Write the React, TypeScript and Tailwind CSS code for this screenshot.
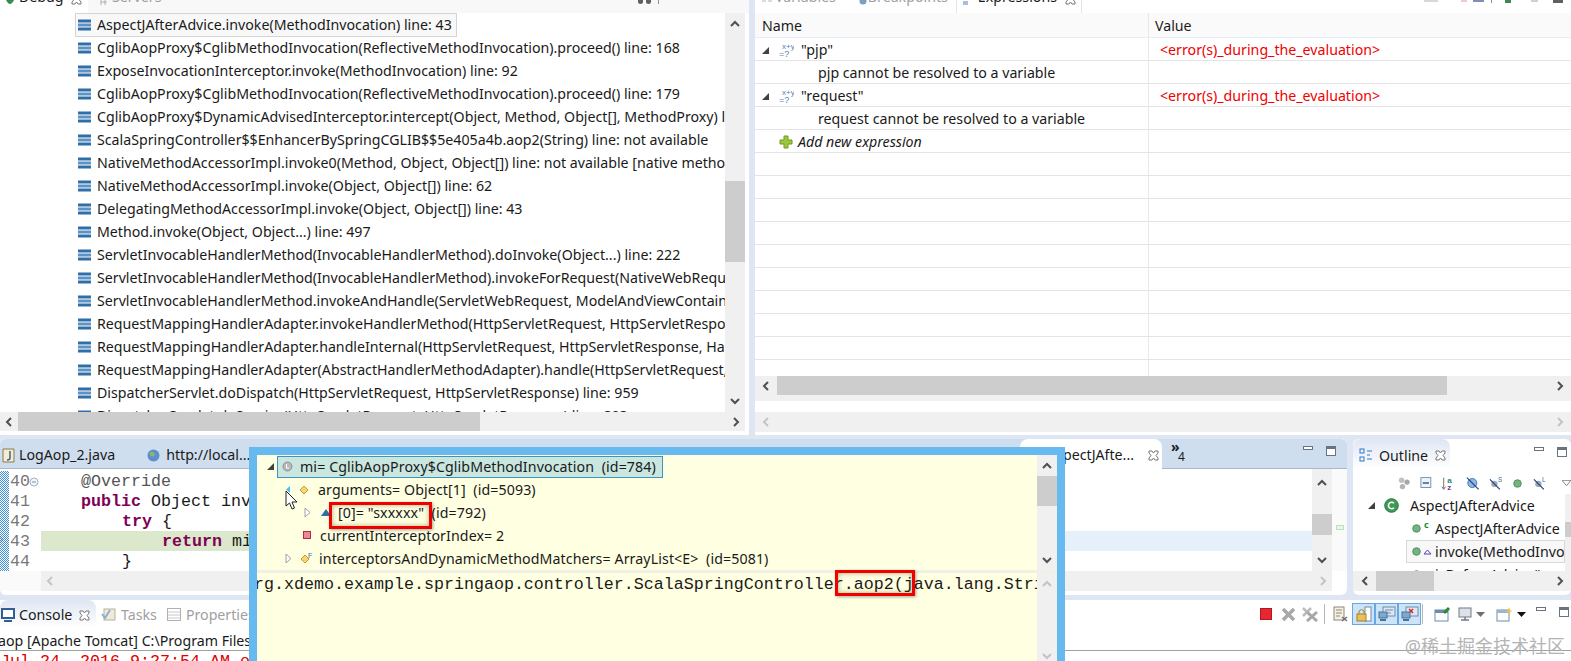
import React from "react";

const Chev = ({ dir, dim }: { dir: "l" | "r" | "u" | "d"; dim?: boolean }) => {
  const d = { l: "M7 1 L3 5 L7 9", r: "M3 1 L7 5 L3 9", u: "M1 7 L5 3 L9 7", d: "M1 3 L5 7 L9 3" }[dir];
  return (
    <svg width="10" height="10" viewBox="0 0 10 10" className="block">
      <path d={d} fill="none" stroke={dim ? "#c4c4c4" : "#505050"} strokeWidth="2" />
    </svg>
  );
};

const HScroll = ({ thumb, arrow = 18, dim, className = "" }: { thumb?: number; arrow?: number; dim?: boolean; className?: string }) => (
  <div className={`flex h-[19px] bg-[#f0f0f0] items-center ${className}`}>
    <div className="flex justify-center shrink-0" style={{ width: arrow }}><Chev dir="l" dim={dim} /></div>
    {thumb ? <div className="h-full bg-[#cdcdcd]" style={{ width: thumb }} /> : null}
    <div className="flex-1" />
    <div className="flex justify-center shrink-0" style={{ width: arrow }}><Chev dir="r" dim={dim} /></div>
  </div>
);

const Frame = () => (
  <svg width="13" height="12" viewBox="0 0 13 12" className="shrink-0">
    <rect x="0" y="0.5" width="13" height="3" fill="#2f6fa8" />
    <rect x="0" y="4.5" width="13" height="3" fill="#5d93c4" />
    <rect x="0" y="8.5" width="13" height="3" fill="#2f6fa8" />
  </svg>
);

const Tri = ({ open, className = "" }: { open?: boolean; className?: string }) =>
  open ? (
    <svg width="9" height="9" viewBox="0 0 9 9" className={className}><path d="M1 8 L8 8 L8 1 Z" fill="#404040" /></svg>
  ) : (
    <svg width="9" height="11" viewBox="0 0 9 11" className={className}><path d="M2 1 L7 5.5 L2 10 Z" fill="#fff" stroke="#9aa0a6" /></svg>
  );

const Close = ({ c = "#777" }: { c?: string }) => (
  <svg width="11" height="11" viewBox="0 0 11 11" className="shrink-0">
    <path d="M1 1 L4 1 L5.5 3 L7 1 L10 1 L10 3 L8 5.5 L10 8 L10 10 L7 10 L5.5 8 L4 10 L1 10 L1 8 L3 5.5 L1 3 Z" fill="#fff" stroke={c} />
  </svg>
);

const MinMax = () => (
  <div className="flex items-start gap-[12px]">
    <svg width="11" height="11" viewBox="0 0 11 11"><rect x="0.5" y="0.5" width="9" height="3" fill="#fff" stroke="#6b7280" /></svg>
    <svg width="11" height="11" viewBox="0 0 11 11"><rect x="0.5" y="0.5" width="9" height="9" fill="#fff" stroke="#6b7280" /><rect x="0.5" y="0.5" width="9" height="2.5" fill="#6b7280" /></svg>
  </div>
);

const XY = () => (
  <svg width="15" height="17" viewBox="0 0 15 17" className="shrink-0">
    <text x="3" y="7" fontSize="8" fill="#5a7fb5" fontFamily="Liberation Sans">x+y</text>
    <text x="0" y="15" fontSize="9" fill="#5a7fb5" fontFamily="Liberation Sans">=?</text>
  </svg>
);

const Plus = () => (
  <svg width="14" height="14" viewBox="0 0 14 14" className="shrink-0">
    <path d="M5 1 H9 V5 H13 V9 H9 V13 H5 V9 H1 V5 H5 Z" fill="#9cc63e" stroke="#6f9a24" />
  </svg>
);

const Diamond = ({ f }: { f?: boolean }) => (
  <svg width="14" height="14" viewBox="0 0 14 14" className="shrink-0">
    <path d="M6 3 L10 7 L6 11 L2 7 Z" fill="#f5d77a" stroke="#c8962c" />
    {f ? <text x="9" y="6" fontSize="7" fill="#2f6fa8" fontFamily="Liberation Sans">F</text> : null}
  </svg>
);

const Dot = () => (
  <svg width="9" height="9" viewBox="0 0 9 9" className="shrink-0"><circle cx="4.5" cy="4.5" r="3.8" fill="#74b27f" stroke="#3e8a4c" strokeWidth="0.8" /></svg>
);

const GreenC = () => (
  <svg width="15" height="15" viewBox="0 0 15 15" className="shrink-0">
    <circle cx="7.5" cy="7.5" r="6.8" fill="#3c9a55" stroke="#2a7a40" />
    <path d="M10 5.3 A3.2 3.2 0 1 0 10 9.7" fill="none" stroke="#fff" strokeWidth="1.6" />
  </svg>
);

const frames = [
  "AspectJAfterAdvice.invoke(MethodInvocation) line: 43",
  "CglibAopProxy$CglibMethodInvocation(ReflectiveMethodInvocation).proceed() line: 168",
  "ExposeInvocationInterceptor.invoke(MethodInvocation) line: 92",
  "CglibAopProxy$CglibMethodInvocation(ReflectiveMethodInvocation).proceed() line: 179",
  "CglibAopProxy$DynamicAdvisedInterceptor.intercept(Object, Method, Object[], MethodProxy) line: 655",
  "ScalaSpringController$$EnhancerBySpringCGLIB$$5e405a4b.aop2(String) line: not available",
  "NativeMethodAccessorImpl.invoke0(Method, Object, Object[]) line: not available [native method]",
  "NativeMethodAccessorImpl.invoke(Object, Object[]) line: 62",
  "DelegatingMethodAccessorImpl.invoke(Object, Object[]) line: 43",
  "Method.invoke(Object, Object...) line: 497",
  "ServletInvocableHandlerMethod(InvocableHandlerMethod).doInvoke(Object...) line: 222",
  "ServletInvocableHandlerMethod(InvocableHandlerMethod).invokeForRequest(NativeWebRequest, ModelAndViewContainer)",
  "ServletInvocableHandlerMethod.invokeAndHandle(ServletWebRequest, ModelAndViewContainer, Object...)",
  "RequestMappingHandlerAdapter.invokeHandlerMethod(HttpServletRequest, HttpServletResponse, HandlerMethod)",
  "RequestMappingHandlerAdapter.handleInternal(HttpServletRequest, HttpServletResponse, HandlerMethod)",
  "RequestMappingHandlerAdapter(AbstractHandlerMethodAdapter).handle(HttpServletRequest, HttpServletResponse, Object)",
  "DispatcherServlet.doDispatch(HttpServletRequest, HttpServletResponse) line: 959",
  "DispatcherServlet.doService(HttpServletRequest, HttpServletResponse) line: 893",
];

const exprRows = [
  { name: '"pjp"', kind: "expr", value: "<error(s)_during_the_evaluation>" },
  { name: "pjp cannot be resolved to a variable", kind: "child" },
  { name: '"request"', kind: "expr", value: "<error(s)_during_the_evaluation>" },
  { name: "request cannot be resolved to a variable", kind: "child" },
  { name: "Add new expression", kind: "add" },
  ...Array.from({ length: 10 }, () => ({ name: "", kind: "empty" })),
] as { name: string; kind: string; value?: string }[];

const code = [
  { n: "40", body: <span className="ml-[40px] text-[#555]">@Override</span> },
  {
    n: "41",
    body: (
      <span className="ml-[40px]">
        <b className="text-[#7f0055]">public</b> Object invoke(MethodInvocation mi) throws Throwable {"{"}
      </span>
    ),
  },
  { n: "42", body: <span className="ml-[81px]"><b className="text-[#7f0055]">try</b> {"{"}</span> },
  { n: "43", body: <span className="ml-[121px]"><b className="text-[#7f0055]">return</b> mi.proceed();</span>, hl: true },
  { n: "44", body: <span className="ml-[81px]">{"}"}</span> },
];

const Btn = ({ children, w = 22, on }: { children: React.ReactNode; w?: number; on?: boolean }) => (
  <div
    className={`h-[22px] flex items-center justify-center shrink-0 ${on ? "bg-[#cce4f8] border border-[#66a7e8]" : ""}`}
    style={{ width: w }}
  >
    {children}
  </div>
);

const Page = () => (
  <svg width="16" height="16" viewBox="0 0 16 16"><rect x="2" y="1" width="10" height="13" fill="#f5f0e0" stroke="#8a8a7a" /><path d="M4 4 H10 M4 7 H10 M4 10 H8" stroke="#8a8a7a" /><path d="M10 11 L15 15 M15 11 L10 15" stroke="#707070" strokeWidth="1.5" /></svg>
);
const Monitor = ({ red }: { red?: boolean }) => (
  <svg width="18" height="16" viewBox="0 0 18 16">
    <rect x="5" y="1" width="12" height="9" fill="#dfe8f2" stroke="#6b8bad" />
    {red ? <path d="M8 3 L12 7 M12 3 L8 7" stroke="#d22" strokeWidth="1.5" /> : <path d="M7 4 H15 M7 7 H13" stroke="#6b8bad" />}
    <rect x="1" y="6" width="8" height="6" fill="#7fa8d0" stroke="#4a7197" />
    <path d="M2 14 H8" stroke="#4a7197" strokeWidth="2" />
  </svg>
);

export default function App() {
  return (
    <div className="relative w-[1571px] h-[661px] overflow-hidden bg-[#dfe6f3] flex flex-col font-['Noto_Sans','Noto_Sans_CJK_SC',sans-serif] text-[14.2px] text-[#1a1a1a]">
      {/* top */}
      <div className="flex h-[435px] shrink-0 gap-[6px]">
        {/* debug */}
        <div className="w-[749px] bg-white flex flex-col shrink-0">
          <div className="h-[13px] overflow-hidden flex bg-[#f8f8f8]">
            <div className="w-[88px] bg-white flex h-[13px]">
              <svg width="10" height="6" viewBox="0 0 10 6" className="ml-[5px] mr-[4px] shrink-0"><path d="M1 0 Q5 8 9 0 Z" fill="#3c8a50" /></svg>
              <span className="-mt-[13px] leading-[20px] h-[20px]">Debug</span>
              <span className="ml-[7px] -mt-[6px]"><Close /></span>
            </div>
            <svg width="8" height="6" viewBox="0 0 8 6" className="ml-[12px] mr-[4px] shrink-0"><path d="M1 0 V5 M5 0 V5 M1 2 H7" stroke="#b0b0b0" /></svg>
            <span className="-mt-[13px] leading-[20px] h-[20px] text-[#a0a0a0]">Servers</span>
            <div className="ml-auto flex h-[4px] gap-[3px] pr-[90px]">
              <div className="w-[5px] h-[4px] bg-[#606060] rounded-b-full" />
              <div className="w-[5px] h-[4px] bg-[#606060] rounded-b-full" />
              <div className="w-[1px] h-[4px] bg-[#909090] ml-[4px]" />
            </div>
          </div>
          <div className="flex h-[399px] pr-[4px]">
            <div className="flex-1 min-w-0 overflow-hidden pl-[75px]">
              {frames.map((f, i) => (
                <div
                  key={f}
                  className={`flex items-center whitespace-nowrap gap-[6px] pb-[1px] ${i === 0 ? "h-[24px] w-[382px] border border-[#d4d4d4] bg-[#f8f8f8] pl-[2px]" : "h-[23px] pl-[3px]"}`}
                >
                  <Frame />
                  <span>{f}</span>
                </div>
              ))}
            </div>
            <div className="w-[20px] bg-[#f0f0f0] flex flex-col items-center shrink-0">
              <div className="h-[30px] pt-[6px] flex justify-center"><Chev dir="u" /></div>
              <div className="h-[138px]" />
              <div className="h-[81px] w-[20px] bg-[#cdcdcd]" />
              <div className="flex-1 flex items-end pb-[6px]"><Chev dir="d" /></div>
            </div>
          </div>
          <HScroll thumb={462} className="mr-[4px]" />
        </div>
        {/* expressions */}
        <div className="flex-1 bg-white flex flex-col min-w-0">
          <div className="h-[13px] overflow-hidden flex bg-white text-[#a0a0a0]">
            <svg width="10" height="6" viewBox="0 0 10 6" className="ml-[7px] mr-[3px] shrink-0"><path d="M0 1 H4 M6 1 H10" stroke="#b8b8b8" /></svg>
            <span className="-mt-[13px] leading-[20px] h-[20px]">Variables</span>
            <svg width="8" height="6" viewBox="0 0 8 6" className="ml-[23px] mr-[1px] shrink-0"><circle cx="4" cy="1" r="3.5" fill="#7f9fc0" /></svg>
            <span className="-mt-[13px] leading-[20px] h-[20px]">Breakpoints</span>
            <div className="ml-[8px] w-[126px] h-[13px] flex pl-[5px] text-[#1a1a1a] border-r border-l border-[#e4e4e4]">
              <svg width="14" height="6" viewBox="0 0 14 6" className="mr-[2px] shrink-0"><path d="M1 2 H6 M1 4 H6" stroke="#5a7fb5" /></svg>
              <span className="-mt-[13px] leading-[20px] h-[20px]">Expressions</span>
              <span className="ml-[8px] -mt-[6px]"><Close /></span>
            </div>
            <div className="ml-auto flex h-[3px] items-start pr-[8px] gap-[0px]">
              <div className="w-[14px] h-[2px] bg-[#d8d8d8] mr-[23px]" />
              <div className="w-[6px] h-[2px] bg-[#f4c8d0] mr-[6px]" />
              <div className="w-[11px] h-[2px] bg-[#8090b0] mr-[7px]" />
              <div className="w-[1px] h-[3px] bg-[#909090] mr-[13px]" />
              <div className="w-[6px] h-[3px] bg-[#3c8a50] mr-[20px]" />
              <div className="w-[7px] h-[2px] bg-[#d0d0d0] mr-[15px]" />
              <div className="w-[10px] h-[3px] bg-[#606060]" />
            </div>
          </div>
          <div className="h-[25px] bg-[#fafafa] border-b border-[#e6eef9] flex items-center shrink-0">
            <div className="w-[394px] pl-[7px] pt-[2px] border-r border-[#e8e8e8] h-full flex items-center">Name</div>
            <div className="pl-[6px] pt-[2px]">Value</div>
          </div>
          <div className="h-[338px] overflow-hidden">
            {exprRows.map((r, i) => (
              <div key={i} className="h-[23px] flex border-b border-[#e4e4e4]">
                <div className="w-[394px] pt-[2px] border-r border-[#e8e8e8] flex items-center whitespace-nowrap">
                  {r.kind === "expr" && (
                    <>
                      <Tri open className="ml-[6px] mr-[9px]" />
                      <XY />
                      <span className="ml-[7px]">{r.name}</span>
                    </>
                  )}
                  {r.kind === "child" && <span className="ml-[63px]">{r.name}</span>}
                  {r.kind === "add" && (
                    <>
                      <span className="ml-[24px]"><Plus /></span>
                      <i className="ml-[5px]">{r.name}</i>
                    </>
                  )}
                </div>
                <div className="pl-[11px] pt-[2px] flex items-center text-[#f00000]">{r.value}</div>
              </div>
            ))}
          </div>
          <HScroll thumb={670} arrow={22} className="shrink-0" />
          <div className="h-[6px] bg-[#f0f0f0] shrink-0" />
          <div className="h-[11px] mr-[7px] shrink-0" />
          <HScroll dim arrow={22} className="h-[20px] shrink-0" />
        </div>
      </div>
      {/* middle */}
      <div className="flex h-[156px] mt-[4px] gap-[6px] shrink-0">
        <div className="w-[1347px] bg-white flex flex-col shrink-0 rounded-[6px] overflow-hidden">
          <div className="h-[30px] pt-[3px] bg-[#cfdeee] border-b border-[#a9b8cc] flex items-center shrink-0 relative">
            <svg width="13" height="15" viewBox="0 0 13 15" className="ml-[2px] shrink-0"><path d="M1 1 H12 V14 H1 Z" fill="#f5ecd0" stroke="#8a7a4a" /><path d="M8 3 V10 Q8 12 5 12" fill="none" stroke="#3a5f9a" strokeWidth="1.5" /></svg>
            <span className="ml-[4px]">LogAop_2.java</span>
            <svg width="13" height="13" viewBox="0 0 13 13" className="ml-[32px] shrink-0"><circle cx="6.5" cy="6.5" r="6" fill="#5b8fd0" /><path d="M3 3 Q7 2 8 6 Q5 9 3 6 Z" fill="#8fb56a" /></svg>
            <span className="ml-[6px]">http://local...</span>
            <div className="ml-auto flex items-center h-[30px] -mt-[3px]">
              <div className="w-[142px] h-[30px] pt-[3px] bg-white rounded-t-[8px] flex items-center justify-end pr-[3px] gap-[14px] whitespace-nowrap overflow-hidden mr-[9px]">
                <span>AspectJAfte...</span>
                <Close />
              </div>
              <div className="w-[132px] h-[30px] pt-[4px] text-[12px] leading-none">
                <div className="font-bold text-[14px] leading-[8px]">»</div>
                <div className="pl-[7px]">4</div>
              </div>
              <div className="mr-[10px] -mt-[4px]"><MinMax /></div>
            </div>
          </div>
          <div className="flex h-[102px] shrink-0">
            <div className="relative w-[9px] h-[100px] bg-[repeating-conic-gradient(#3f8fe0_0_25%,#ffffff_0_50%)] bg-[length:2px_2px] shrink-0 mt-[2px]">
              <svg width="4" height="9" viewBox="0 0 4 9" className="absolute left-0 top-[64px]"><path d="M0 1 L3 4.5 L0 8" fill="none" stroke="#60707f" /></svg>
            </div>
            <div className="flex-1 min-w-0 overflow-hidden pt-[2px] font-['Liberation_Mono',monospace] text-[16.67px]">
              {code.map((l) => (
                <div key={l.n} className="h-[20px] leading-[22px] flex whitespace-nowrap">
                  <span className="w-[32px] shrink-0 pl-[1px] text-[#787878] flex items-start">
                    {l.n}
                    {l.n === "40" ? (
                      <svg width="10" height="10" viewBox="0 0 10 10" className="mt-[6px] ml-[-1px] shrink-0"><circle cx="5" cy="5" r="4" fill="#f2f5f9" stroke="#a8b4c4" /><path d="M3 5 H7" stroke="#8090a4" /></svg>
                    ) : null}
                  </span>
                  <div className={`flex-1 ${l.hl ? "bg-[linear-gradient(90deg,#dbe8cc_0,#dbe8cc_300px,#e6f0fb_300px)]" : ""}`}>{l.body}</div>
                </div>
              ))}
            </div>
            <div className="w-[20px] bg-[#f0f0f0] flex flex-col items-center shrink-0">
              <div className="h-[45px] pt-[9px]"><Chev dir="u" /></div>
              <div className="h-[21px] w-[20px] bg-[#cdcdcd]" />
              <div className="flex-1 flex items-end pb-[6px]"><Chev dir="d" /></div>
            </div>
            <div className="w-[15px] bg-[#fafafa] shrink-0 flex flex-col items-center pt-[56px]">
              <div className="w-[8px] h-[5px] border border-[#bfe0bf] bg-[#e8f5e8]" />
            </div>
          </div>
          <div className="flex h-[20px] shrink-0">
            <div className="w-[41px] bg-[#fafafa]" />
            <HScroll dim className="flex-1 h-[20px]" />
            <div className="w-[15px]" />
          </div>
        </div>
        <div className="flex-1 bg-white flex flex-col min-w-0 rounded-[6px] overflow-hidden">
          <div className="h-[30px] flex shrink-0">
            <div className="w-[97px] pt-[3px] rounded-t-[8px] bg-gradient-to-b from-[#dfe6f3] to-white flex items-center">
              <svg width="14" height="15" viewBox="0 0 14 15" className="ml-[6px] shrink-0"><rect x="1" y="1" width="4" height="4" fill="none" stroke="#2f78c8" /><rect x="1" y="9" width="4" height="4" fill="none" stroke="#2f78c8" /><path d="M8 3 H13 M8 7 H11 M8 11 H13" stroke="#2f78c8" /></svg>
              <span className="ml-[6px]">Outline</span>
              <span className="ml-[7px]"><Close /></span>
            </div>
            <div className="ml-auto pt-[8px] pr-[3px]"><MinMax /></div>
          </div>
          <div className="h-[25px] pt-[3px] shrink-0 flex items-center pl-[45px] gap-[9px]">
            <svg width="14" height="14" viewBox="0 0 14 14"><circle cx="4" cy="4" r="3" fill="#c0c0c0" /><circle cx="10" cy="6" r="3" fill="#a8a8a8" /><circle cx="5" cy="11" r="3" fill="#b4b4b4" /></svg>
            <svg width="14" height="14" viewBox="0 0 14 14"><rect x="1" y="1" width="11" height="11" fill="#eef3f9" stroke="#6b8bad" /><path d="M3 7 H10" stroke="#3a5f8a" strokeWidth="1.5" /></svg>
            <svg width="18" height="17" viewBox="0 0 18 17"><path d="M3 2 V14 M1 12 L3 15 L5 12" fill="none" stroke="#666" /><text x="7" y="8" fontSize="9" fontWeight="700" fill="#2a8a80" fontFamily="Liberation Sans">a</text><text x="7" y="16" fontSize="9" fontWeight="700" fill="#8a3a9a" fontFamily="Liberation Sans">z</text></svg>
            <svg width="15" height="15" viewBox="0 0 15 15"><circle cx="7" cy="7" r="5" fill="#8fb8e0" stroke="#3a6fa8" /><path d="M1 1 L14 14" stroke="#1a3f8a" strokeWidth="1.3" /></svg>
            <svg width="15" height="15" viewBox="0 0 15 15"><circle cx="6" cy="8" r="3.5" fill="#a0a8b0" /><path d="M1 3 L12 14" stroke="#1a3f8a" strokeWidth="1.3" /><text x="10" y="6" fontSize="7" fill="#2f6fa8" fontFamily="Liberation Sans">S</text></svg>
            <span className="mx-[2px]"><Dot /></span>
            <svg width="15" height="15" viewBox="0 0 15 15"><circle cx="6" cy="8" r="3.5" fill="#a0a8b0" /><path d="M1 3 L12 14" stroke="#1a3f8a" strokeWidth="1.3" /><text x="10" y="6" fontSize="7" fill="#2f6fa8" fontFamily="Liberation Sans">L</text></svg>
            <svg width="10" height="6" viewBox="0 0 10 6" className="ml-[6px]"><path d="M0 0 H10 L5 6 Z" fill="#fff" stroke="#777" /></svg>
          </div>
          <div className="h-[77px] flex shrink-0">
            <div className="flex-1 min-w-0 overflow-hidden whitespace-nowrap">
              <div className="h-[23px] flex items-center pl-[14px]">
                <Tri open />
                <span className="ml-[8px]"><GreenC /></span>
                <span className="ml-[11px]">AspectJAfterAdvice</span>
              </div>
              <div className="h-[23px] flex items-center pl-[59px]">
                <Dot />
                <span className="text-[9px] font-bold text-[#1e8a3a] ml-[3px] -mt-[8px] w-[11px]">c</span>
                <span>AspectJAfterAdvice</span>
              </div>
              <div className="h-[23px] flex items-center ml-[53px] pl-[5px] border border-[#d8d8d8] bg-[#f8f8f8] overflow-hidden">
                <Dot />
                <svg width="9" height="6" viewBox="0 0 9 6" className="ml-[2px] mr-[3px] shrink-0"><path d="M1 5 L4.5 1 L8 5 Z" fill="none" stroke="#5a3fb0" /></svg>
                <span>invoke(MethodInvocation)</span>
              </div>
              <div className="h-[23px] flex items-center pl-[59px]">
                <Dot />
                <span className="ml-[14px]">isBeforeAdvice()</span>
              </div>
            </div>
            <div className="w-[6px] bg-[#f0f0f0] shrink-0 pt-[28px]">
              <div className="h-[15px] bg-[#cdcdcd]" />
            </div>
          </div>
          <HScroll thumb={58} arrow={23} className="h-[20px] shrink-0" />
        </div>
      </div>
      {/* console */}
      <div className="mt-[5px] flex-1 bg-white flex flex-col min-h-0 relative">
        <div className="h-[28px] flex shrink-0 items-center">
          <div className="w-[96px] h-[28px] pt-[2px] rounded-t-[8px] bg-gradient-to-b from-[#dfe6f3] to-white flex items-center">
            <svg width="14" height="14" viewBox="0 0 14 14" className="ml-[1px] shrink-0"><rect x="1" y="1" width="12" height="9" fill="#fff" stroke="#2f5f94" strokeWidth="2" /><path d="M3 13 H11" stroke="#2f5f94" strokeWidth="2" /></svg>
            <span className="ml-[4px]">Console</span>
            <span className="ml-[7px]"><Close /></span>
          </div>
          <svg width="15" height="14" viewBox="0 0 15 14" className="ml-[5px] shrink-0"><rect x="3" y="2" width="11" height="11" fill="#f0ead8" stroke="#b8b098" /><path d="M1 7 L4 11 L9 3" fill="none" stroke="#8ab0d8" strokeWidth="2" /></svg>
          <span className="ml-[5px] pt-[2px] text-[#a0a0a0]">Tasks</span>
          <svg width="14" height="13" viewBox="0 0 14 13" className="ml-[10px] shrink-0"><rect x="0.5" y="0.5" width="13" height="12" fill="#fff" stroke="#b0b0b0" /><path d="M1 4 H13 M1 7 H13 M1 10 H13" stroke="#c8c8c8" /></svg>
          <span className="ml-[5px] pt-[2px] text-[#a0a0a0]">Properties</span>
          <div className="ml-auto flex items-center h-[22px] pr-[1px]">
            <Btn>
              <svg width="12" height="12" viewBox="0 0 12 12"><rect x="0.5" y="0.5" width="11" height="11" fill="#e8282e" stroke="#b01a1e" /></svg>
            </Btn>
            <Btn>
              <svg width="15" height="15" viewBox="0 0 15 15"><path d="M2 2 L13 13 M13 2 L2 13" stroke="#a8a8a8" strokeWidth="3.5" /></svg>
            </Btn>
            <Btn>
              <svg width="16" height="15" viewBox="0 0 16 15"><path d="M1 1 L9 9 M9 1 L1 9" stroke="#bcbcbc" strokeWidth="2.5" /><path d="M5 5 L15 14 M15 5 L5 14" stroke="#a8a8a8" strokeWidth="3" /></svg>
            </Btn>
            <div className="w-[1px] h-[20px] bg-[#b8b8b8] mx-[3px]" />
            <Btn w={24}><Page /></Btn>
            <Btn w={23} on>
              <svg width="18" height="17" viewBox="0 0 18 17"><rect x="10" y="1" width="6" height="14" fill="#fff" stroke="#6b8bad" /><rect x="2" y="8" width="9" height="7" fill="#e8c060" stroke="#a88020" /><path d="M4 8 V5 Q6.5 2 9 5 V8" fill="none" stroke="#a88020" /></svg>
            </Btn>
            <Btn w={23} on><Monitor /></Btn>
            <Btn w={23} on><Monitor red /></Btn>
            <div className="w-[1px] h-[20px] bg-[#b8b8b8] ml-[1px] mr-[9px]" />
            <Btn>
              <svg width="18" height="16" viewBox="0 0 18 16"><rect x="1" y="4" width="13" height="11" fill="#fff" stroke="#6b8bad" /><rect x="1" y="4" width="13" height="3" fill="#6b8bad" /><path d="M10 7 L15 2" stroke="#2a8a3a" strokeWidth="3" /></svg>
            </Btn>
            <Btn>
              <svg width="14" height="15" viewBox="0 0 14 15"><rect x="1" y="1" width="12" height="9" fill="#dde2e8" stroke="#707a84" /><path d="M3 13 H11 M7 10 V13" stroke="#707a84" strokeWidth="1.5" /></svg>
            </Btn>
            <svg width="9" height="5" viewBox="0 0 9 5" className="shrink-0 mr-[9px]"><path d="M0 0 H9 L4.5 5 Z" fill="#707070" /></svg>
            <Btn w={20}>
              <svg width="16" height="15" viewBox="0 0 16 15"><rect x="1" y="3" width="12" height="11" fill="#fff" stroke="#6b8bad" /><rect x="1" y="3" width="12" height="3" fill="#9ab5d4" /><path d="M13 0 L14 3 L16 4 L14 5 L13 8 L12 5 L10 4 L12 3 Z" fill="#f0c040" /></svg>
            </Btn>
            <svg width="9" height="5" viewBox="0 0 9 5" className="shrink-0 ml-[3px] mr-[10px]"><path d="M0 0 H9 L4.5 5 Z" fill="#111" /></svg>
            <div className="-mt-[4px]"><MinMax /></div>
          </div>
        </div>
        <div className="h-[23px] pt-[3px] border-b border-[#a0a0a0] whitespace-nowrap flex items-center shrink-0">
          <span className="-ml-[2px]">aop [Apache Tomcat] C:\Program Files\Java\jre1.8.0_91\bin\javaw.exe</span>
        </div>
        <div className="font-['Liberation_Mono',monospace] text-[16.67px] leading-[22px] text-[#e00000] whitespace-nowrap">Jul 24, 2016 9:27:54 AM org.apache.catalina.core</div>
        <span className="absolute right-[6px] top-[33px] text-[18px] text-[#b4b4b4]">@稀土掘金技术社区</span>
      </div>

      {/* popup */}
      <div className="absolute left-[249px] top-[447px] w-[816px] h-[214px] border-[8px] border-b-0 border-[#66baf0] bg-[#ffffe1] flex flex-col tracking-[0.1px]">
        <div className="h-[115px] flex shrink-0">
          <div className="flex-1 min-w-0 overflow-hidden whitespace-nowrap relative">
            <div className="h-[23px] flex items-center">
              <Tri open className="ml-[9px]" />
              <div className="ml-[2px] w-[386px] h-[22px] bg-[#c9e7df] border border-[#3f93c0] flex items-center pl-[4px]">
                <svg width="11" height="11" viewBox="0 0 11 11" className="shrink-0"><circle cx="5.5" cy="5.5" r="4.5" fill="#b8b8b8" stroke="#909090" /><path d="M4.5 3 V7 H7" fill="none" stroke="#fff" /></svg>
                <span className="ml-[7px]">mi= CglibAopProxy$CglibMethodInvocation&nbsp; (id=784)</span>
              </div>
            </div>
            <div className="h-[23px] flex items-center pl-[41px]">
              <Diamond />
              <span className="ml-[6px]">arguments= Object[1]&nbsp; (id=5093)</span>
            </div>
            <div className="h-[23px] flex items-center pl-[46px]">
              <Tri />
              <svg width="12" height="9" viewBox="0 0 12 9" className="ml-[8px] shrink-0"><path d="M6 1 L11 8 H1 Z" fill="#2f6fa8" /></svg>
              <span className="ml-[6px]">[0]= "sxxxxx"&nbsp; (id=792)</span>
            </div>
            <div className="h-[23px] flex items-center pl-[46px]">
              <svg width="9" height="9" viewBox="0 0 9 9" className="shrink-0"><rect x="0.5" y="0.5" width="7" height="7" fill="#e88a98" stroke="#c0263a" /></svg>
              <span className="ml-[8px]">currentInterceptorIndex= 2</span>
            </div>
            <div className="h-[23px] flex items-center pl-[27px]">
              <Tri />
              <span className="ml-[6px]"><Diamond f /></span>
              <span className="ml-[6px]">interceptorsAndDynamicMethodMatchers= ArrayList&lt;E&gt;&nbsp; (id=5081)</span>
            </div>
          </div>
          <div className="w-[20px] bg-[#f0f0f0] flex flex-col items-center shrink-0">
            <div className="h-[21px] pt-[6px]"><Chev dir="u" /></div>
            <div className="h-[30px] w-[20px] bg-[#cdcdcd]" />
            <div className="flex-1 flex items-end pb-[5px]"><Chev dir="d" /></div>
          </div>
        </div>
        <div className="h-[3px] bg-[#f0f0e4] shrink-0" />
        <div className="flex-1 flex min-h-0">
          <div className="flex-1 min-w-0 overflow-hidden pt-[1px] font-['Liberation_Mono',monospace] text-[16.67px] leading-[22px] tracking-normal whitespace-nowrap">
            <div className="-ml-[13px]">org.xdemo.example.springaop.controller.ScalaSpringController.aop2(java.lang.String)</div>
          </div>
          <div className="w-[20px] bg-[#f0f0f0] flex flex-col items-center justify-between shrink-0 pt-[6px]">
            <Chev dir="u" dim />
            <Chev dir="d" dim />
          </div>
        </div>
      </div>

      {/* annotations */}
      <div className="absolute left-[329px] top-[502px] w-[103px] h-[27px] border-[3px] border-[#f00000] shadow-[inset_0_0_5px_rgba(70,70,0,0.45),1px_1px_3px_rgba(0,0,0,0.35)]" />
      <div className="absolute left-[835px] top-[570px] w-[80px] h-[26px] border-[3px] border-[#f00000] shadow-[inset_0_0_5px_rgba(70,70,0,0.45),1px_1px_3px_rgba(0,0,0,0.35)]" />
      <svg width="5" height="9" viewBox="0 0 5 9" className="absolute left-[286px] top-[485px]"><path d="M4 1 V8 L0 4.5 Z" fill="#4fc0ef" /></svg>
      <svg width="14" height="21" viewBox="0 0 14 21" className="absolute left-[285px] top-[490px]">
        <path d="M1 1 V16 L4.5 13 L7 19 L9.5 18 L7 12 L12 12 Z" fill="#fff" stroke="#222" />
      </svg>
    </div>
  );
}
